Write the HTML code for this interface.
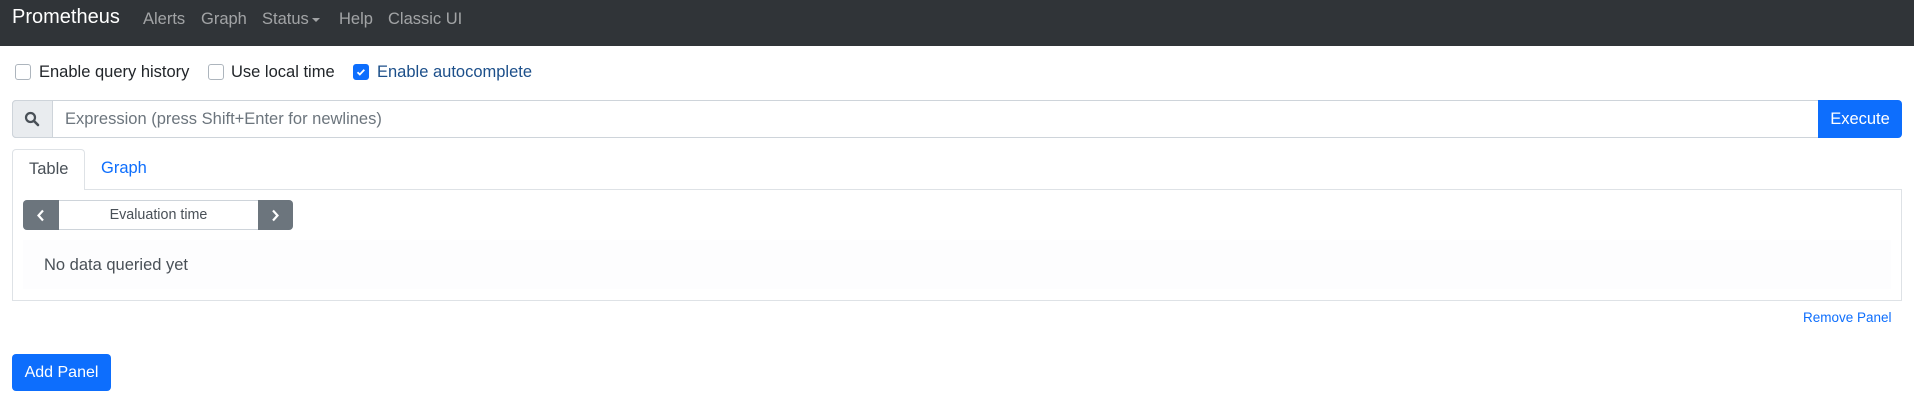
<!DOCTYPE html>
<html><head><style>
*{box-sizing:border-box;margin:0;padding:0}
body{width:1914px;height:416px;background:#fff;font-family:"Liberation Sans",Arial,sans-serif;position:relative;overflow:hidden;color:#212529}
.a{position:absolute;white-space:nowrap}
.nav{left:0;top:0;width:1914px;height:46px;background:#303438}
.nl{color:rgba(255,255,255,.55);font-size:16.5px;top:10px}
.cb{width:16px;height:16px;border:1px solid #adb5bd;border-radius:3px;background:#fff}
.lbl{font-size:16.5px;top:63px}
</style></head><body>
<div class="a nav"></div>
<div class="a" style="left:12px;top:6px;font-size:20px;color:#fff">Prometheus</div>
<div class="a nl" style="left:143px">Alerts</div>
<div class="a nl" style="left:201px">Graph</div>
<div class="a nl" style="left:262px">Status</div>
<div class="a" style="left:312px;top:18px;width:0;height:0;border-left:4px solid transparent;border-right:4px solid transparent;border-top:4px solid rgba(255,255,255,.55)"></div>
<div class="a nl" style="left:339px">Help</div>
<div class="a nl" style="left:388px">Classic UI</div>

<div class="a cb" style="left:15px;top:64px"></div>
<div class="a lbl" style="left:39px">Enable query history</div>
<div class="a cb" style="left:208px;top:64px"></div>
<div class="a lbl" style="left:231px">Use local time</div>
<div class="a cb" style="left:353px;top:64px;background:#0d6efd;border-color:#0d6efd"><svg width="14" height="14" viewBox="0 0 14 14" style="display:block"><path d="M3.5 7.2l2.3 2.3 4.5-4.8" stroke="#fff" stroke-width="1.8" fill="none"/></svg></div>
<div class="a lbl" style="left:377px;color:#1c4f8a">Enable autocomplete</div>

<div class="a" style="left:12px;top:100px;width:1814px;height:38px;border:1px solid #ced4da;border-radius:4px 0 0 4px"></div>
<div class="a" style="left:12px;top:100px;width:41px;height:38px;background:#e9ecef;border:1px solid #ced4da;border-radius:4px 0 0 4px"></div>
<svg class="a" style="left:24px;top:111px" width="16" height="16" viewBox="0 0 16 16"><circle cx="6.5" cy="6.5" r="4.5" stroke="#495057" stroke-width="2.2" fill="none"/><path d="M10 10l4 4" stroke="#495057" stroke-width="2.6" stroke-linecap="round"/></svg>
<div class="a" style="left:65px;top:110px;font-size:16.5px;color:#6c757d">Expression (press Shift+Enter for newlines)</div>
<div class="a" style="left:1818px;top:100px;width:84px;height:38px;background:#0d6efd;border-radius:0 4px 4px 0;color:#fff;font-size:16.5px;text-align:center;line-height:38px">Execute</div>

<div class="a" style="left:12px;top:189px;width:1890px;height:112px;border:1px solid #dee2e6"></div>
<div class="a" style="left:12px;top:149px;width:73px;height:41px;border:1px solid #dee2e6;border-bottom:none;border-radius:4px 4px 0 0;background:#fff;font-size:16.5px;color:#495057;padding:10px 0 0 16px">Table</div>
<div class="a" style="left:101px;top:159px;font-size:16.5px;color:#0d6efd">Graph</div>

<div class="a" style="left:23px;top:200px;width:270px;height:30px;border:1px solid #ced4da;border-radius:4px"></div>
<div class="a" style="left:23px;top:200px;width:36px;height:30px;background:#6c757d;border-radius:4px 0 0 4px"></div>
<svg class="a" style="left:36px;top:209px" width="10" height="13" viewBox="0 0 10 13"><path d="M7 1.5L2.5 6.5 7 11.5" stroke="#fff" stroke-width="2.2" fill="none"/></svg>
<div class="a" style="left:258px;top:200px;width:35px;height:30px;background:#6c757d;border-radius:0 4px 4px 0"></div>
<svg class="a" style="left:270px;top:209px" width="10" height="13" viewBox="0 0 10 13"><path d="M3 1.5L7.5 6.5 3 11.5" stroke="#fff" stroke-width="2.2" fill="none"/></svg>
<div class="a" style="left:59px;top:207px;width:199px;text-align:center;font-size:14.3px;color:#495057">Evaluation time</div>

<div class="a" style="left:23px;top:240px;width:1868px;height:49px;background:#fdfdfe"></div>
<div class="a" style="left:44px;top:256px;font-size:16.5px;color:#495057">No data queried yet</div>

<div class="a" style="left:1803px;top:310px;font-size:13.5px;color:#0d6efd">Remove Panel</div>
<div class="a" style="left:12px;top:354px;width:99px;height:37px;background:#0d6efd;border-radius:4px;color:#fff;font-size:16px;text-align:center;line-height:37px">Add Panel</div>
</body></html>
